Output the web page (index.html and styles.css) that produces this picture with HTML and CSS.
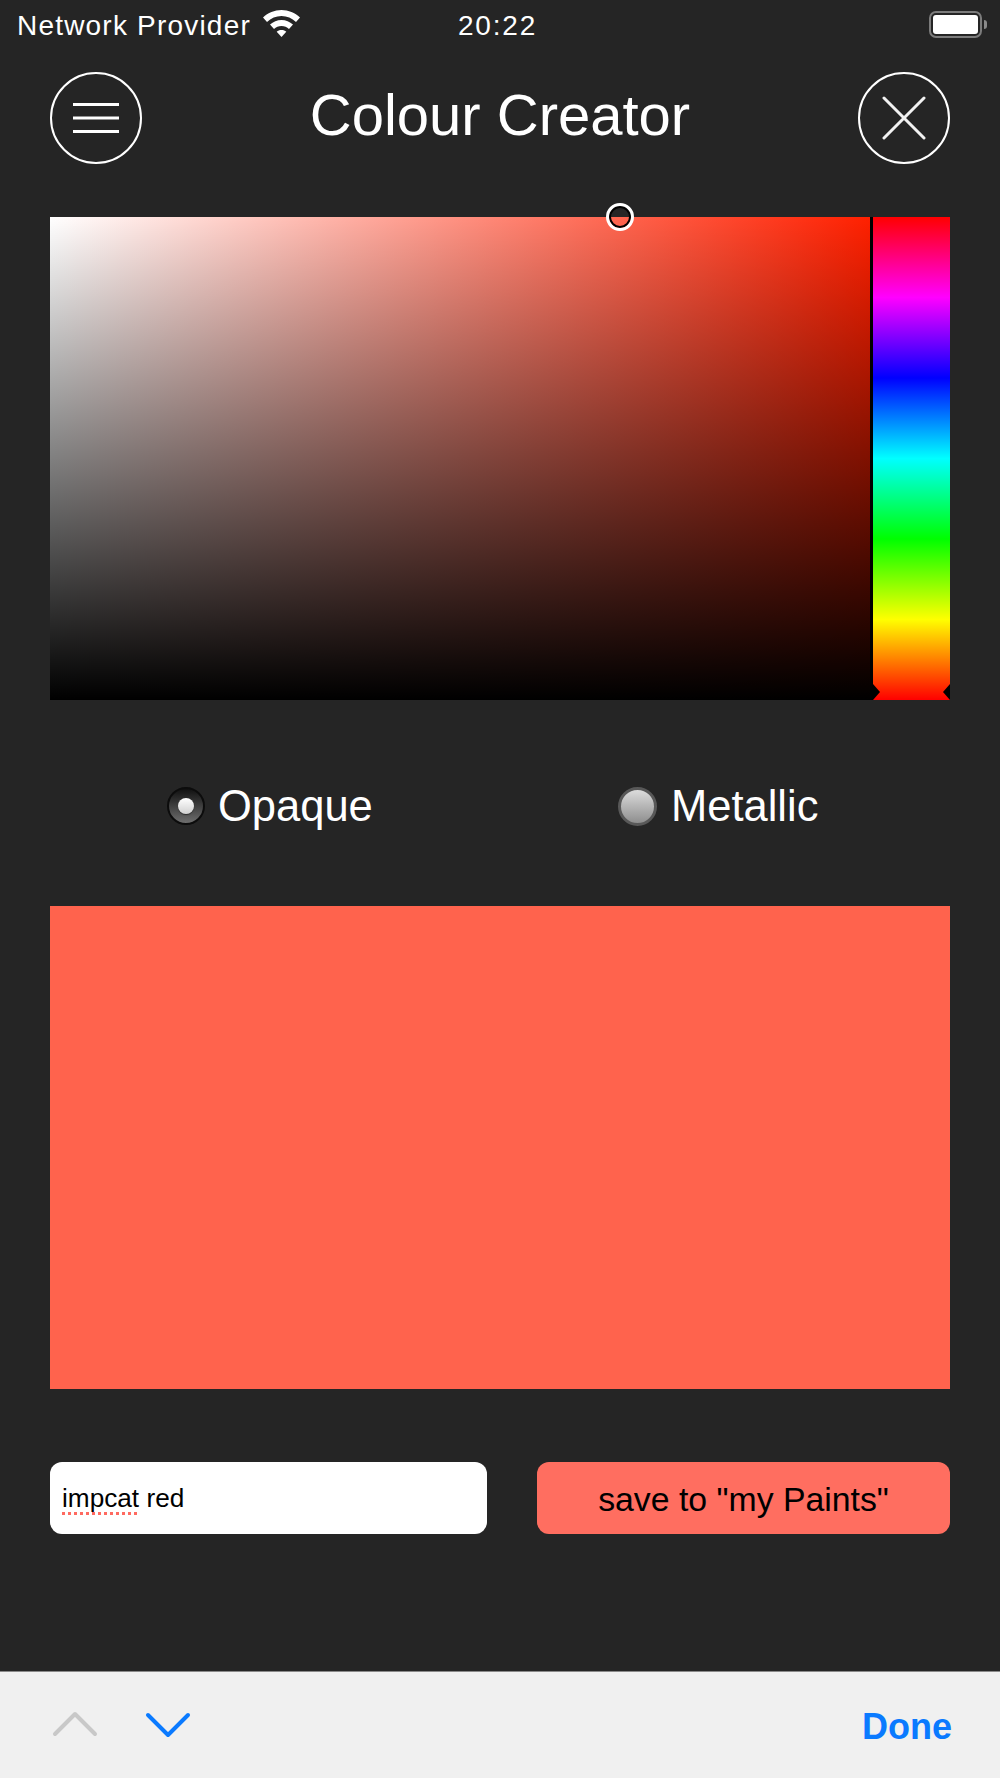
FILE: index.html
```html
<!DOCTYPE html>
<html lang="en">
<head>
    <meta charset="UTF-8">
    <title>Colour Creator</title>
    <meta name="viewport" content="width=device-width, initial-scale=1.0">
    <link rel="stylesheet" href="styles.css">
</head>
<body>
    <div class="status-bar">
        <div class="status-left">
            <span class="status-text">Network Provider</span>
            <svg width="37" height="27" viewBox="0 0 37 27">
                <path d="M18.500 0C25.500 0 32 2.800 37 7.500L33 12C29 8.200 24 6 18.500 6C13 6 8 8.200 4 12L0 7.500C5 2.800 11.500 0 18.500 0Z" fill="#fff"/>
                <path d="M18.500 10C22.800 10 26.800 11.700 30 14.600L26 19C24 17.100 21.400 16 18.500 16C15.600 16 13 17.100 11 19L7 14.600C10.200 11.700 14.200 10 18.500 10Z" fill="#fff"/>
                <path d="M18.500 20C20.500 20 22 20.600 23.300 21.700L18.500 27L13.700 21.700C15 20.600 16.500 20 18.500 20Z" fill="#fff"/>
            </svg>
        </div>
        <span class="status-text status-time">20:22</span>
        <div class="battery">
            <div class="battery-body"><div class="battery-fill"></div></div>
            <div class="battery-cap"></div>
        </div>
    </div>

    <div class="header">
        <button class="round-btn">
            <svg width="46" height="34" viewBox="0 0 46 34">
                <path d="M0 3.500H46M0 17H46M0 30.500H46" stroke="#fff" stroke-width="3" fill="none"/>
            </svg>
        </button>
        <h1 class="title">Colour Creator</h1>
        <button class="round-btn">
            <svg width="44" height="44" viewBox="0 0 44 44">
                <path d="M2 2L42 42M42 2L2 42" stroke="#f2f2f2" stroke-width="3" stroke-linecap="round" fill="none"/>
            </svg>
        </button>
    </div>

    <div class="picker">
        <div class="sv-box">
            <div class="sv-cursor"></div>
        </div>
        <div class="hue-strip">
            <div class="hue-mark hue-mark-left"></div>
            <div class="hue-mark hue-mark-right"></div>
        </div>
    </div>

    <div class="finish-row">
        <div class="finish-option">
            <div class="radio radio-on"><div class="radio-dot"></div></div>
            <span class="finish-label">Opaque</span>
        </div>
        <div class="finish-option">
            <div class="radio radio-off"></div>
            <span class="finish-label">Metallic</span>
        </div>
    </div>

    <div class="preview"></div>

    <div class="save-row">
        <div class="name-input"><span class="misspelt">impcat</span> red</div>
        <button class="save-btn">save to "my Paints"</button>
    </div>

    <div class="keyboard-bar">
        <div class="arrows">
            <svg width="46" height="26" viewBox="0 0 46 26">
                <path d="M3 23L23 3L43 23" stroke="#c8c8c8" stroke-width="4" stroke-linecap="round" stroke-linejoin="round" fill="none"/>
            </svg>
            <svg class="arrow-down" width="46" height="26" viewBox="0 0 46 26">
                <path d="M3 3L23 23L43 3" stroke="#0a7aff" stroke-width="4" stroke-linecap="round" stroke-linejoin="round" fill="none"/>
            </svg>
        </div>
        <span class="done">Done</span>
    </div>
</body>
</html>
```

FILE: styles.css
```css
* {
    box-sizing: border-box;
}
body {
    margin: 0;
    width: 1000px;
    height: 1778px;
    overflow: hidden;
    font-family: "Liberation Sans", Arial, sans-serif;
    background-color: #252525;
    color: #ffffff;
    display: flex;
    flex-direction: column;
}
.status-bar {
    height: 50px;
    padding: 10px 32px 0 17px;
    display: grid;
    grid-template-columns: 1fr auto 1fr;
    align-items: start;
}
.status-left {
    display: flex;
    align-items: flex-start;
    gap: 12px;
}
.status-text {
    font-size: 28px;
    line-height: 31px;
    letter-spacing: 1.2px;
}
.status-time {
    padding-left: 10px;
    letter-spacing: 1.8px;
}
.battery {
    justify-self: end;
    display: flex;
    align-items: center;
    margin: 1px -19px 0 0;
    gap: 2px;
}
.battery-body {
    width: 53px;
    height: 27px;
    border: 2.500px solid #7c7c7c;
    border-radius: 7px;
    padding: 2px;
}
.battery-fill {
    height: 100%;
    background-color: #ffffff;
    border-radius: 3px;
}
.battery-cap {
    width: 3px;
    height: 9px;
    background-color: #8a8a8a;
    border-radius: 0 3px 3px 0;
}
.header {
    height: 92px;
    margin: 22px 50px 0;
    display: flex;
    justify-content: space-between;
    align-items: center;
}
.round-btn {
    width: 92px;
    height: 92px;
    padding: 0;
    border: 2.500px solid #ffffff;
    border-radius: 50%;
    background: none;
    display: flex;
    align-items: center;
    justify-content: center;
}
.title {
    margin: 0;
    padding-bottom: 6px;
    font-size: 58px;
    font-weight: normal;
    line-height: 64px;
}
.picker {
    margin: 53px 50px 0;
    height: 483px;
    display: flex;
    gap: 3px;
    background-color: #000000;
}
.sv-box {
    position: relative;
    width: 820px;
    background:
        linear-gradient(to top, #000000, rgba(0, 0, 0, 0)),
        linear-gradient(to right, #ffffff, #ff2000);
}
.sv-cursor {
    position: absolute;
    left: 556px;
    top: -14px;
    width: 28px;
    height: 28px;
    border: 3px solid #ffffff;
    border-radius: 50%;
    box-shadow: inset 0 0 0 2px #000000;
}
.hue-strip {
    position: relative;
    flex: 1;
    background: linear-gradient(to bottom, #ff0000 0%, #ff00ff 16.67%, #0000ff 33.33%, #00ffff 50%, #00ff00 66.67%, #ffff00 83.33%, #ff0000 100%);
}
.hue-mark {
    position: absolute;
    bottom: 0;
    width: 0;
    height: 0;
    border-top: 8.500px solid transparent;
    border-bottom: 8.500px solid transparent;
}
.hue-mark-left {
    left: 0;
    border-left: 7px solid #000000;
}
.hue-mark-right {
    right: 0;
    border-right: 7px solid #000000;
}
.finish-row {
    margin: 83px 50px 0;
    height: 46px;
    display: flex;
}
.finish-option {
    display: flex;
    align-items: center;
    gap: 14px;
}
.finish-option:first-child {
    margin-left: 117px;
    width: 451px;
    gap: 13px;
}
.radio {
    border-radius: 50%;
}
.radio-on {
    width: 38px;
    height: 38px;
    background: linear-gradient(to bottom, #111111, #6e6e6e);
    border: 2px solid #0c0c0c;
    display: flex;
    align-items: center;
    justify-content: center;
}
.radio-dot {
    width: 16px;
    height: 16px;
    border-radius: 50%;
    background: linear-gradient(to bottom, #ffffff, #d0d0d0);
    box-shadow: 0 1px 1px #2c2c2c;
}
.radio-off {
    width: 39px;
    height: 39px;
    background: linear-gradient(to bottom, #dcdcdc, #8e8e8e);
    border: 3px solid #585858;
}
.finish-label {
    font-size: 43.500px;
    line-height: 46px;
}
.preview {
    margin: 77px 50px 0;
    height: 483px;
    background-color: #ff634d;
}
.save-row {
    margin: 73px 50px 0;
    height: 72px;
    display: flex;
    justify-content: space-between;
}
.name-input {
    width: 437px;
    padding-left: 12px;
    background-color: #ffffff;
    border-radius: 12px;
    color: #000000;
    font-size: 26.200px;
    line-height: 72px;
}
.misspelt {
    text-decoration: underline dotted #ff6a60 3px;
    text-decoration-skip-ink: none;
    text-underline-offset: 5px;
}
.save-btn {
    width: 413px;
    border: none;
    border-radius: 12px;
    background-color: #ff6e60;
    color: #000000;
    font-family: inherit;
    font-size: 33.800px;
    padding: 2px 0 0;
}
.keyboard-bar {
    margin-top: auto;
    height: 107px;
    padding: 3px 48px 0 52px;
    background-color: #f0f0f0;
    border-top: 1px solid #8a8a8a;
    display: flex;
    justify-content: space-between;
    align-items: center;
}
.arrows {
    align-self: flex-start;
    margin-top: 36px;
    display: flex;
    align-items: flex-start;
    gap: 47px;
}
.arrow-down {
    margin-top: 1px;
}
.done {
    color: #0a7aff;
    font-size: 36px;
    font-weight: bold;
}
```
